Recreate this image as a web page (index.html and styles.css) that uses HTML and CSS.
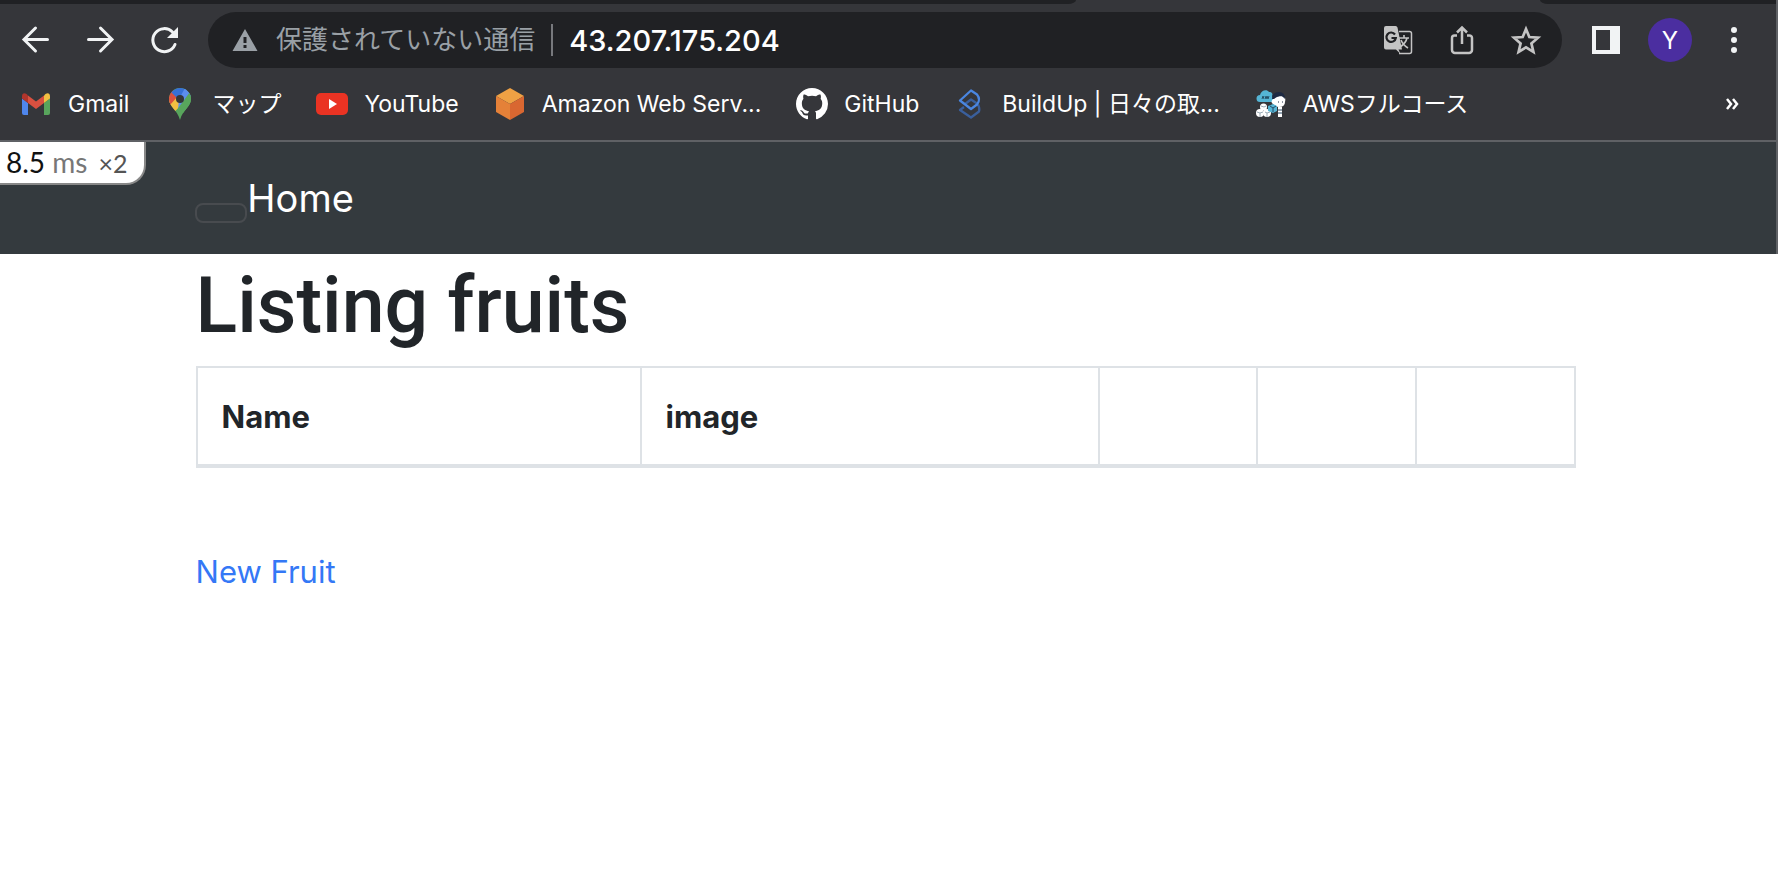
FILE: index.html
```
<!DOCTYPE html>
<html lang="ja">
<head>
<meta charset="utf-8">
<title>Listing fruits</title>
<link rel="stylesheet" href="styles.css">
</head>
<body>
<div class="browser">
  <div class="tab-strip"><span class="tab-left"></span><span class="tab-right"></span></div>
  <div class="toolbar">
    <div class="nav-buttons">
      <button class="icon-button" aria-label="Back"><svg width="32" height="32" viewBox="0 0 32 32" fill="none" stroke="#f1f3f4" stroke-width="3" stroke-linecap="round"><path d="M27.500 15.500H4.500M15.500 4 4 15.500 15.500 27"/></svg></button>
      <button class="icon-button" aria-label="Forward"><svg width="32" height="32" viewBox="0 0 32 32" fill="none" stroke="#f1f3f4" stroke-width="3" stroke-linecap="round"><path d="M4.500 15.500H27.500M16.500 4 28 15.500 16.500 27"/></svg></button>
      <button class="icon-button" aria-label="Reload"><svg width="32" height="32" viewBox="0 0 32 32"><path d="M27 20.500A11.500 11.500 0 1 1 24.500 8" fill="none" stroke="#f1f3f4" stroke-width="3" stroke-linecap="round"/><path d="M30 3V14H19Z" fill="#f1f3f4"/></svg></button>
    </div>
    <div class="address-bar">
      <svg class="warning" width="26" height="22" viewBox="0 0 26 22"><path fill="#9aa0a6" fill-rule="evenodd" d="M13 0 25.500 22H.5ZM11.500 8v6h3V8Zm0 8v3h3v-3Z"/></svg>
      <span class="security">保護されていない通信</span>
      <input class="url" aria-label="Address" value="43.207.175.204">
      <div class="address-actions">
        <button class="icon-button" aria-label="Translate"><svg width="32" height="32" viewBox="0 0 32 32"><path d="M17 7.500h10.500a2 2 0 0 1 2 2v18a2 2 0 0 1-2 2H17" fill="none" stroke="#c4c4c4" stroke-width="1.500"/><path d="M4 2h9.500a2 2 0 0 1 2 1.500L20 25.500h-3.500L18.500 30l-4.500-4.500H4a2 2 0 0 1-2-2V4a2 2 0 0 1 2-2Z" fill="#c4c4c4"/><path d="M13 10.500a4.700 4.700 0 1 0 .8 3.500H9.500" fill="none" stroke="#202124" stroke-width="2.200"/><path d="M17 14h10M22 11v3M25 14q-1 5-7 9M19 16q2 5 7 8" fill="none" stroke="#c4c4c4" stroke-width="1.600"/></svg></button>
        <button class="icon-button" aria-label="Share"><svg width="32" height="32" viewBox="0 0 32 32" fill="none" stroke="#c4c4c4" stroke-width="2.500"><path d="M11 11.500H8.500a2.500 2.500 0 0 0-2.500 2.500v12a3 3 0 0 0 3 3h14a3 3 0 0 0 3-3V14a2.500 2.500 0 0 0-2.500-2.500H21M16 20V3.500M11 8.500l5-5 5 5"/></svg></button>
        <button class="icon-button" aria-label="Bookmark"><svg width="32" height="32" viewBox="0 0 32 32" fill="none" stroke="#c4c4c4" stroke-width="2.700"><path d="m16 5 3.300 8 8.700.7-6.600 5.700 2 8.400-7.400-4.500-7.400 4.500 2-8.400L4 13.700l8.700-.7Z"/></svg></button>
      </div>
    </div>
    <button class="icon-button" aria-label="Side panel"><svg width="28" height="28" viewBox="0 0 28 28"><path fill="#f1f3f4" fill-rule="evenodd" d="M0 0h28v28H0ZM4 4v20h14V4Z"/></svg></button>
    <button class="avatar">Y</button>
    <button class="icon-button" aria-label="Menu"><svg width="28" height="28" viewBox="0 0 28 28" fill="#f1f3f4"><circle cx="14" cy="4" r="3"/><circle cx="14" cy="14" r="3"/><circle cx="14" cy="24" r="3"/></svg></button>
  </div>
  <nav class="bookmarks">
    <a class="bookmark" href="#"><svg width="32" height="32" viewBox="0 0 32 32"><path fill="#4f86ec" d="M2 10.500 8 15v12H4a2 2 0 0 1-2-2Z"/><path fill="#58a55c" d="M24 15l6-4.500V25a2 2 0 0 1-2 2h-4Z"/><path fill="#d95040" d="M8 7.500l8 6 8-6V15l-8 6-8-6Z"/><path fill="#b1352c" d="M2 8.500C2 5 5 4 8 7.500V15l-6-4.500Z"/><path fill="#f2bf42" d="M30 8.500C30 5 27 4 24 7.500V15l6-4.500Z"/></svg><span>Gmail</span></a>
    <a class="bookmark" href="#"><svg width="32" height="32" viewBox="0 0 32 32"><defs><clipPath id="pin"><path d="M16 0a11 11 0 0 1 11 11c0 8-8 10-11 21C13 21 5 19 5 11A11 11 0 0 1 16 0Z"/></clipPath></defs><g clip-path="url(#pin)"><path fill="#58a55c" d="M0 0h32v32H0Z"/><path fill="#f2bf42" d="M0 9h12l8 6L8 26 0 24Z"/><path fill="#d95040" d="M0 0h7l7 8-8 9H0Z"/><path fill="#3670d7" d="M7 4 16-2l7 4-8 10Z"/><path fill="#5b8def" d="M21 0l7 7-14 15 1-11Z"/><path fill="#58a55c" d="m26 4 3 7-8 15-9-3Z"/></g><circle cx="16" cy="11" r="4" fill="#35363a"/></svg><span>マップ</span></a>
    <a class="bookmark" href="#"><svg width="32" height="32" viewBox="0 0 32 32"><rect y="5" width="32" height="22" rx="5" fill="#ea3323"/><path fill="#fff" d="m13 11 8 5-8 5Z"/></svg><span>YouTube</span></a>
    <a class="bookmark" href="#"><svg width="32" height="32" viewBox="0 0 32 32"><path fill="#efa144" d="m16 0 14 8-14 8L2 8Z"/><path fill="#e58138" d="m2 8 14 8v16L2 24Z"/><path fill="#d96731" d="m30 8-14 8v16l14-8Z"/></svg><span>Amazon Web Serv...</span></a>
    <a class="bookmark" href="#"><svg width="32" height="32" viewBox="0 0 16 16"><path fill="#fff" d="M8 0C3.580 0 0 3.580 0 8c0 3.540 2.290 6.530 5.470 7.590.4.070.55-.17.55-.38 0-.19-.01-.82-.01-1.490-2.010.37-2.530-.49-2.690-.94-.09-.23-.48-.94-.82-1.130-.28-.15-.68-.52-.01-.53.63-.01 1.080.58 1.230.82.72 1.210 1.870.87 2.330.66.07-.52.28-.87.51-1.070-1.780-.2-3.640-.89-3.640-3.950 0-.87.31-1.590.82-2.150-.08-.2-.36-1.020.08-2.120 0 0 .67-.21 2.200.82.640-.18 1.320-.27 2-.27s1.360.09 2 .27c1.530-1.040 2.200-.82 2.200-.82.440 1.100.16 1.920.08 2.120.51.56.82 1.270.82 2.150 0 3.070-1.870 3.750-3.650 3.950.29.25.54.73.54 1.480 0 1.070-.01 1.930-.01 2.200 0 .21.15.46.55.38A8 8 0 0 0 16 8c0-4.420-3.580-8-8-8Z"/></svg><span>GitHub</span></a>
    <a class="bookmark" href="#"><svg width="32" height="32" viewBox="0 0 32 32" fill="none" stroke-width="2.300" stroke-linejoin="round"><path stroke="#3a5f9c" d="M10 19 6 22l11 7.500 8-6q1-3-1-7"/><path stroke="#3a5f9c" d="m11 16 6-4.500 6 4"/><path stroke="#4a86e0" d="m17 2.500 6 4q4 5 0 10l-6 4.500L6 12.500Z"/></svg><span>BuildUp | 日々の取...</span></a>
    <a class="bookmark" href="#"><svg width="32" height="32" viewBox="0 0 32 32"><path fill="#55b5d5" d="M5 14a3.500 3.500 0 0 1 0-7c1-5 7-6 9-3 3 0 4 2 3 4q3 6-2 6Z"/><path d="M7 11l1-3 1 3M10 8l1 3 1-3 1 3 1-3" fill="none" stroke="#245269" stroke-width="1"/><path fill="#fff" d="M18 11q5-5 11-2 2 1 1 5 0 5-6 5-4 0-6-3-3-2 0-5Z"/><path fill="#1d2942" d="M17 11q0-7 7-7 6 0 6 7l-3-3q-5 0-8 3Z"/><path d="M23 14h1M27 14h1" stroke="#1d2942"/><circle cx="8.500" cy="19" r="3.500" fill="#fff"/><circle cx="5" cy="25" r="4" fill="#fff"/><circle cx="12" cy="25" r="4" fill="#fff"/><path d="m2 24 3 1 3-1M5 25v4M10 24l2 1 3-1M12 25v4M6 18l3 1 2-1" fill="none" stroke="#9aaab5"/><path fill="#fff" d="M23 19h4v10h-4Z"/><path fill="#55b5d5" d="m13 18 5-2 4 2v5l-4 2-5-2Z"/><path d="m15 18 3 2 3-2M18 20v4M23 22h4M23 25h4" fill="none" stroke="#284b66"/></svg><span>AWSフルコース</span></a>
    <button class="more" aria-label="More bookmarks"><svg width="14" height="14" viewBox="0 0 14 14" fill="none" stroke="#fff" stroke-width="2.500"><path d="M1 2l4 5-4 5M7 2l4 5-4 5"/></svg></button>
  </nav>
</div>
<div class="page">
  <header class="navbar">
    <div class="profiler"><span class="time">8.5</span> <span class="unit">ms</span> <span class="count">×2</span></div>
    <div class="container navbar-row">
      <button class="toggler" aria-label="Toggle navigation"></button>
      <a class="home" href="#">Home</a>
    </div>
  </header>
  <main class="container">
    <h1>Listing fruits</h1>
    <table class="fruits">
      <colgroup><col class="col-name"><col class="col-image"><col><col><col></colgroup>
      <thead><tr><th>Name</th><th>image</th><th></th><th></th><th></th></tr></thead>
    </table>
    <a class="new-fruit" href="#">New Fruit</a>
  </main>
</div>
</body>
</html>
```
FILE: styles.css
```
* { box-sizing: border-box; }
body {
  margin: 0;
  background: #fff;
  color: #212529;
  font-family: Inter, "Noto Sans CJK JP", sans-serif;
  font-size: 31px;
}
button { padding: 0; border: 0; background: none; color: inherit; font: inherit; }
a { text-decoration: none; }
svg { display: block; flex: none; }

.browser { background: #35363a; color: #fff; border: solid #5f6165; border-width: 0 2px 2px 0; }
.tab-strip { display: flex; justify-content: space-between; height: 4px; }
.tab-left { width: 1076px; background: #202124; border-bottom-right-radius: 8px 4px; }
.tab-right { width: 236px; background: #202124; border-bottom-left-radius: 8px 4px; }
.toolbar { display: flex; align-items: center; padding: 8px 28px 0 20px; }
.nav-buttons { display: flex; gap: 32px; margin-right: 28px; }
.address-bar {
  display: flex;
  flex: 1;
  align-items: center;
  height: 56px;
  margin-right: 30px;
  padding: 0 20px 0 24px;
  border-radius: 28px;
  background: #202124;
}
.security { margin-left: 18px; padding-right: 16px; border-right: 2px solid #77797d; color: #9aa0a6; font-size: 26px; line-height: 32px; }
.url { flex: 1; min-width: 0; margin-left: 16px; padding: 0; border: 0; background: none; color: #fff; font: 500 29px Inter, sans-serif; }
.address-actions { display: flex; gap: 32px; }
.avatar { width: 44px; height: 44px; margin: 0 28px; border-radius: 50%; background: #4b2ea0; color: #fff; font-size: 24px; }

.bookmarks { display: flex; align-items: center; height: 72px; padding: 0 36px 0 20px; gap: 35px; font-size: 23px; line-height: 32px; }
.bookmark { display: flex; align-items: center; gap: 16px; color: #fff; white-space: nowrap; }
.bookmark span { height: 32px; }
.more { margin-left: auto; }

.container { width: 78%; max-width: 1380px; margin-left: 11%; }
.navbar { position: relative; background: #343a3e; border-right: 2px solid #5f6165; }
.profiler {
  position: absolute;
  top: 0;
  left: 0;
  padding: 0 16px 0 6px;
  border: solid #888;
  border-width: 0 2px 2px 0;
  border-bottom-right-radius: 20px;
  background: #fff;
  color: #111;
  font: 28px/40px Lato, sans-serif;
}
.unit { color: #777; }
.count { margin-left: 4px; color: #555; font-size: 25px; }
.navbar-row { display: flex; align-items: center; height: 112px; }
.toggler { width: 52px; height: 20px; margin-top: 30px; border: 2px solid #484b4f; border-radius: 8px; }
.home { color: #fff; font-size: 38px; }

h1 { margin: 0; padding: 4px 0 12px; font-family: Roboto, sans-serif; font-size: 77px; font-weight: 500; line-height: 96px; }
.fruits { width: 100%; border-collapse: collapse; table-layout: fixed; }
.fruits th { height: 99px; padding: 0 24px; border: 2px solid #dee2e6; border-bottom-width: 4px; text-align: left; }
.col-name { width: 444px; }
.col-image { width: 458px; }
.new-fruit { display: inline-block; margin-top: 80px; color: #3478f6; line-height: 48px; }
```
